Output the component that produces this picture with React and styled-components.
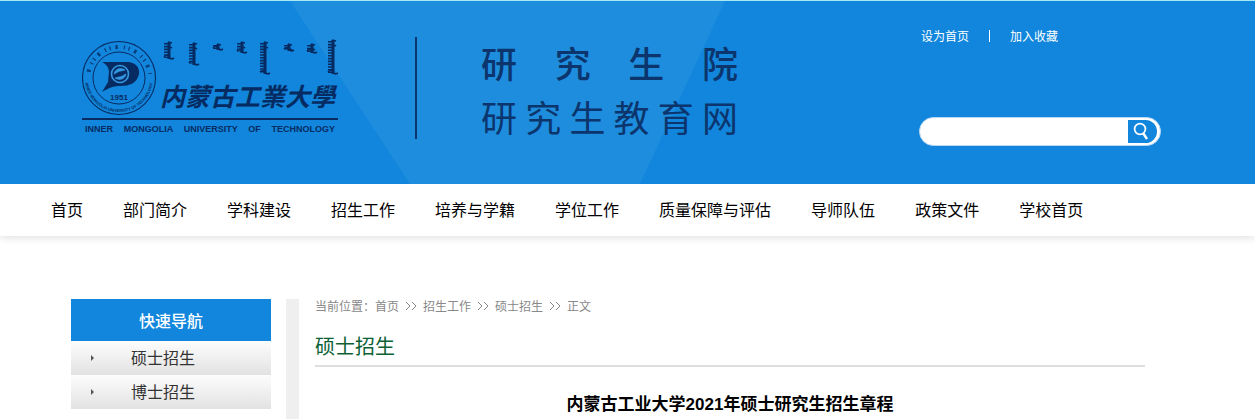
import styled, { createGlobalStyle } from "styled-components";

const ink = "#0b356c";
const logoInk = "#062b62";
const blue = "#1186dc";

const GlobalStyle = createGlobalStyle`
  * { box-sizing: border-box; }
  body {
    margin: 0;
    background: #fff;
    font-family: "Noto Sans CJK SC", sans-serif;
    font-size: 16px;
    color: #000;
  }
  a { color: inherit; text-decoration: none; }
  ul { list-style: none; margin: 0; padding: 0; }
`;

const Header = styled.header`
  position: relative;
  display: flex;
  align-items: flex-start;
  height: 184px;
  padding: 0 94px 0 82px;
  border-top: 1px solid #a5e9f5;
  background: ${blue};

  &::before {
    content: "";
    position: absolute;
    inset: 0 auto 0 290px;
    width: 435px;
    background: #1e8dde;
    clip-path: polygon(0 0, 100% 0, 350px 100%, 120px 100%);
  }
`;

const Brand = styled.a`
  position: relative;
  width: 256px;
  margin-top: 38px;
  color: ${logoInk};
`;

const BrandTop = styled.div`
  display: flex;
  justify-content: space-between;
  height: 81px;
  border-bottom: 2px solid ${logoInk};
`;

const Emblem = styled.svg`
  width: 76px;
  height: 78px;
`;

const BrandWords = styled.div`
  width: 178px;
`;

const Script = styled.svg`
  display: block;
  width: 178px;
  height: 36px;
`;

const SchoolName = styled.div`
  font: italic 700 25px/40px "Noto Sans CJK TC", sans-serif;
  white-space: nowrap;
`;

const SchoolLatin = styled.div`
  padding: 0 3px;
  font: 700 9px/18px "Liberation Sans", sans-serif;
  text-align-last: justify;
  white-space: nowrap;
`;

const Titles = styled.div`
  position: relative;
  display: flex;
  flex-direction: column;
  gap: 4px;
  width: 323px;
  height: 102px;
  margin: 36px 0 0 77px;
  padding-left: 64px;
  border-left: 2px solid ${ink};
  color: ${ink};
`;

const Title = styled.div`
  font-size: 36px;
  font-weight: ${(props) => props.$weight};
  line-height: 50px;
  text-align-last: justify;
`;

const Tools = styled.div`
  position: relative;
  width: 242px;
  margin: 26px 0 0 auto;
`;

const TopLinks = styled.div`
  display: flex;
  align-items: center;
  gap: 20px;
  padding-left: 2px;
  font-size: 12px;
  line-height: 18px;
  color: #fff;
`;

const Bar = styled.span`
  width: 1px;
  height: 12px;
  background: #fff;
`;

const Search = styled.form`
  display: flex;
  height: 29px;
  margin-top: 72px;
  padding: 2px 3px 2px 14px;
  border: 1px solid #b9d9f2;
  border-radius: 15px;
  background: #fff;

  input {
    flex: 1;
    min-width: 0;
    border: 0;
    outline: 0;
    background: transparent;
    font: inherit;
  }
  button {
    width: 29px;
    padding: 0;
    border: 0;
    border-radius: 0 12px 12px 0;
    background: ${blue};
  }
  svg { display: block; }
`;

const Nav = styled.nav`
  height: 52px;
  padding-left: 51px;
  background: #fff;
  box-shadow: 0 2px 8px rgba(0, 0, 0, 0.12);

  ul {
    display: flex;
    gap: 40px;
    line-height: 50px;
    white-space: nowrap;
  }
`;

const Main = styled.main`
  display: flex;
  align-items: stretch;
  min-height: 120px;
  margin: 63px 110px 0 71px;
`;

const Side = styled.aside`
  width: 200px;
  margin-right: 15px;
`;

const SideTitle = styled.h2`
  margin: 0;
  background: ${blue};
  color: #fff;
  font-size: 16px;
  font-weight: 500;
  line-height: 42px;
  text-align: center;
`;

const SideItem = styled.li`
  a {
    display: flex;
    height: 34px;
    padding-left: 20px;
    background: linear-gradient(#fdfdfd, #e2e2e2);
    color: #333;
    line-height: 32px;
  }
  svg { margin: 14px 36px 0 0; }
`;

const Content = styled.section`
  flex: 1;
  padding-left: 16px;
  border-left: 13px solid #efefef;
`;

const Crumbs = styled.div`
  display: flex;
  gap: 6px;
  font-size: 12px;
  line-height: 14px;
  color: #888;

  svg { margin-top: 2px; }
`;

const Section = styled.h1`
  margin: 15px 0 0;
  padding-bottom: 2px;
  border-bottom: 2px solid #dcdfdd;
  color: #0b6134;
  font-size: 20px;
  font-weight: 400;
  line-height: 35px;
`;

const Article = styled.h3`
  margin: 26px 0 0;
  font-family: "Liberation Sans", "Noto Sans CJK SC", sans-serif;
  font-size: 17px;
  font-weight: 700;
  line-height: 24px;
  text-align: center;
`;

const menu = ["首页", "部门简介", "学科建设", "招生工作", "培养与学籍", "学位工作", "质量保障与评估", "导师队伍", "政策文件", "学校首页"];
const side = ["硕士招生", "博士招生"];
const crumbs = ["首页", "招生工作", "硕士招生", "正文"];

// x, top, bottom of each decorative column above the school name
const columns = [[8, 3, 20], [33, 4, 26], [57, 5, 11], [81, 3, 14], [104, 3, 35], [128, 5, 12], [151, 5, 14], [172, 1, 35]];

function EmblemMark() {
  return (
    <Emblem viewBox="0 0 76 78" fill="none" stroke={logoInk} aria-hidden="true">
      <circle cx="37" cy="39" r="36.5" strokeWidth="1.1" />
      <circle cx="37" cy="39" r="26" />
      <circle cx="37" cy="39" r="31" strokeWidth="4" strokeDasharray="1 4 2 5 1 3" pathLength="160" strokeOpacity=".8" clipPath="url(#upper)" />
      <clipPath id="upper"><path d="M0 0h76v35H0z" /></clipPath>
      <path id="ring" d="M3 39a34 34 0 0 0 68 0" stroke="none" />
      <text fill={logoInk} stroke="none" fontFamily="Liberation Sans" fontWeight="700" fontSize="4">
        <textPath href="#ring" startOffset="50%" textAnchor="middle">INNER MONGOLIA UNIVERSITY OF TECHNOLOGY</textPath>
      </text>
      <path d="M20 23h27q11 2 10 12c-2 9-9 12-19 12-7 0-11 2-18 6l6-10 1-11q-1-6-7-9z" fill={logoInk} stroke="none" />
      <circle cx="38" cy="35" r="8.5" stroke="#3498e2" strokeWidth="1.6" />
      <path d="M32 35c1-5 6-7 11-4l-4 1c-3 0-4 2-7 3zm12 0c-1 5-6 7-11 4l4-1c3 0 4-2 7-3z" fill="#3498e2" stroke="#3498e2" strokeWidth=".7" />
      <text x="37" y="61" fill={logoInk} stroke="none" fontFamily="Liberation Sans" fontWeight="700" fontSize="8" textAnchor="middle">1951</text>
    </Emblem>
  );
}

function Columns() {
  return (
    <Script viewBox="0 0 178 36" stroke={logoInk} fill="none" aria-hidden="true">
      {columns.map(([x, top, bottom]) => (
        <g key={x}>
          <path d={`M${x + 1} ${top}V${bottom}`} strokeWidth="3" />
          <path d={`M${x - 2} ${top + 1}V${bottom - 1}`} strokeWidth="4" strokeDasharray="1.6 1.2" />
          <path d={`M${x - 4} ${bottom - 2}q3-3 5 0t5 1M${x} ${top}l4 1M${x + 2} ${top + 5}l2 1`} strokeWidth="1.7" />
        </g>
      ))}
    </Script>
  );
}

function Arrows() {
  return (
    <svg width="12" height="10" fill="none" stroke="#888" aria-hidden="true">
      <path d="M1 1l4 4-4 4M7 1l4 4-4 4" />
    </svg>
  );
}

function App() {
  return (
    <>
      <GlobalStyle />
      <Header>
        <Brand href="#">
          <BrandTop>
            <EmblemMark />
            <BrandWords>
              <Columns />
              <SchoolName>内蒙古工業大學</SchoolName>
            </BrandWords>
          </BrandTop>
          <SchoolLatin>INNER MONGOLIA UNIVERSITY OF TECHNOLOGY</SchoolLatin>
        </Brand>
        <Titles>
          <Title $weight={500}>研究生院</Title>
          <Title $weight={400}>研究生教育网</Title>
        </Titles>
        <Tools>
          <TopLinks>
            <a href="#">设为首页</a>
            <Bar />
            <a href="#">加入收藏</a>
          </TopLinks>
          <Search onSubmit={(e) => e.preventDefault()}>
            <input type="text" aria-label="搜索" />
            <button type="submit" aria-label="搜索">
              <svg width="27" height="23" fill="none" stroke="#fff" strokeWidth="1.7">
                <circle cx="12" cy="9" r="5.4" />
                <path d="M15 13l4 6" strokeWidth="2.4" />
              </svg>
            </button>
          </Search>
        </Tools>
      </Header>
      <Nav>
        <ul>
          {menu.map((name) => <li key={name}><a href="#">{name}</a></li>)}
        </ul>
      </Nav>
      <Main>
        <Side>
          <SideTitle>快速导航</SideTitle>
          <ul>
            {side.map((name) => (
              <SideItem key={name}>
                <a href="#">
                  <svg width="4" height="6" fill="#555"><path d="M0 0l3 3-3 3z" /></svg>
                  {name}
                </a>
              </SideItem>
            ))}
          </ul>
        </Side>
        <Content>
          <Crumbs>
            <span>当前位置：<a href="#">首页</a></span>
            {crumbs.slice(1).map((name) => [
              <Arrows key={"arrow" + name} />,
              <a href="#" key={name}>{name}</a>,
            ])}
          </Crumbs>
          <Section>硕士招生</Section>
          <Article>内蒙古工业大学2021年硕士研究生招生章程</Article>
        </Content>
      </Main>
    </>
  );
}

export default App;
